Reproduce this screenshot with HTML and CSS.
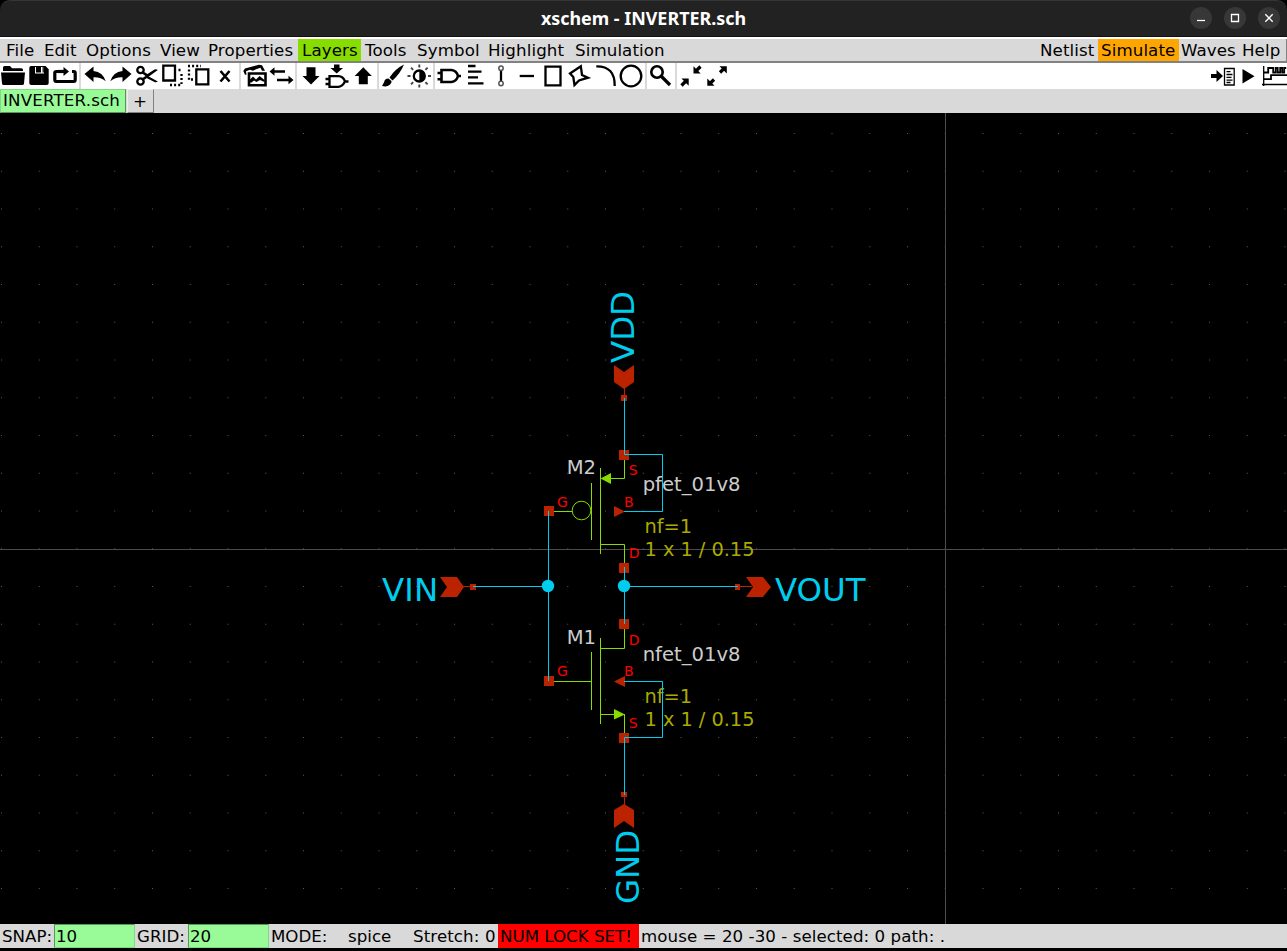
FILE: index.html
```html
<!DOCTYPE html>
<html lang="en">
<head>
<meta charset="utf-8">
<title>xschem - INVERTER.sch</title>
<link rel="stylesheet" href="styles.css">
</head>
<body>
<div class="window">
<header class="titlebar">
  <div class="title">xschem - INVERTER.sch</div>
  <div class="controls">
    <span class="ctl"><svg viewBox="0 0 22 22"><path d="M7 13.500h8"/></svg></span>
    <span class="ctl"><svg viewBox="0 0 22 22"><path d="M7.500 7.500h7v7h-7z"/></svg></span>
    <span class="ctl"><svg viewBox="0 0 22 22"><path d="M7.300 7.300l7.400 7.400M14.700 7.300l-7.400 7.400"/></svg></span>
  </div>
</header>
<nav class="menubar">
  <span class="m w38">File</span><span class="m w42">Edit</span><span class="m w74">Options</span><span class="m w48">View</span><span class="m w94">Properties</span><span class="m w63 layers">Layers</span><span class="m w52">Tools</span><span class="m w71">Symbol</span><span class="m w87">Highlight</span><span class="m w98">Simulation</span>
  <span class="m right w62">Netlist</span><span class="m w81 simulate">Simulate</span><span class="m w60 waves">Waves</span><span class="m w48 help">Help</span>
</nav>
<div class="toolbar">
  <svg class="ic" viewBox="0 0 26 26"><path d="M3 8V4.500Q3 3 4.500 3H10l2 2.200h9.500Q23 5.200 23 7v1z"/><path d="M1 9.500h24l-1 11q-.2 1.500-1.700 1.500H3.700Q2.200 22 2 20.500z"/></svg>
  <svg class="ic" viewBox="0 0 26 26"><path d="M5 3h14.500l3.200 3.200V20q0 2-2 2H5.300q-2 0-2-2V5q0-2 1.700-2z"/><path class="wf" d="M9 4h9v6.500H9z"/><path d="M10 3.500h5v6H10zM16.600 3.500h1.200v6h-1.200z"/></svg>
  <svg class="ic" viewBox="0 0 26 26"><path class="s3" d="M8 8.500H4.500Q2.800 8.500 2.800 10v6.500q0 2 1.500 2h17.400q1.500 0 1.500-2V10q0-1.500-1.500-1.500H20"/><path class="s3" d="M6 8.500h7"/><path d="M11.500 4l5.500 4.500-5.500 4.500z"/></svg>
  <i class="sep"></i>
  <svg class="ic" viewBox="0 0 26 26"><path d="M2.500 11L11.500 3.500v4.500q9.500 1 12.200 10.300-5-4.300-12.200-4v4.700z"/></svg>
  <svg class="ic" viewBox="0 0 26 26"><path d="M23.500 11L14.500 3.500v4.500Q5 9 2.300 18.300q5-4.300 12.200-4v4.700z"/></svg>
  <svg class="ic" viewBox="0 0 26 26"><circle class="s2" cx="6.500" cy="7" r="3.200"/><circle class="s2" cx="6.500" cy="18.500" r="3.200"/><path d="M8.500 8l5 3 7-4.500q2-.8 3.300.6L11.500 16l-3 2-1.500-2 4.500-3L7.500 10z"/><path d="M13 12.500l10.800 6q-1.200 1.300-3.300.5l-9-4.500z"/></svg>
  <svg class="ic" viewBox="0 0 26 26"><path class="s2" d="M3.300 2.700h11.700v14.800H3.300z"/><path class="dot" d="M18.500 7h4M21.500 11v10M10 22h12"/></svg>
  <svg class="ic" viewBox="0 0 26 26"><path class="s2" d="M10.300 6.300h12v15h-12z"/><path class="dot" d="M2 3h13M3 6.500v12M5 16.500h3"/></svg>
  <svg class="ic" viewBox="0 0 26 26"><path class="s25" d="M8.500 8l9 10.500M17.500 8l-9 10.500"/></svg>
  <i class="sep"></i>
  <svg class="ic" viewBox="0 0 26 26"><path class="s25" d="M7 10.500h16.500v11.800H7z"/><path d="M1.300 8L3 5.500 17 1.700l3 .5 3 5.500h-3l-1.500-3-4.500 1.500-3 1.500-3-1-4 1.500.5 3.500H3zM7.500 17l3.500-3.500 3 3 3.500-3.500 5 4v2l-4.500-2-3.500 2-2.500-1.500-2.500 2h-2z"/></svg>
  <svg class="ic" viewBox="0 0 26 26"><path class="s25" d="M5 8.500h12M9 17h12"/><path d="M1.500 8.500l5-4.300v8.600zM25.500 17l-5-4.300v8.600z"/></svg>
  <i class="sep"></i>
  <svg class="ic" viewBox="0 0 26 26"><path d="M8.500 4.300h9V13h4L13 21.500 4.500 13h4z"/></svg>
  <svg class="ic" viewBox="0 0 26 26"><path d="M10 1.500h5.500V5H19l-6.300 5.500L6.500 5H10z"/><path class="s2" d="M5.500 13.200h9q4.500.3 6.500 5-2 5.300-6.500 5.600h-9zM1.500 16h4M1.500 21h4M21 18.500h3.500"/></svg>
  <svg class="ic" viewBox="0 0 26 26"><path d="M8.800 21.300h9V13h4L13.300 4.300 4.700 13h4.100z"/></svg>
  <i class="sep"></i>
  <svg class="ic" viewBox="0 0 26 26"><path d="M24 1.500q-8.500 4-14.500 13l3 3Q20 11 24 1.500zM8.500 15.500q-4 0-4.300 3.500L2 23q5 1.200 7.500-1 2.500-2 2-4z"/></svg>
  <svg class="ic" viewBox="0 0 26 26"><circle class="s2" cx="13.300" cy="13" r="5.500"/><path d="M13.300 7.500a5.500 5.500 0 0 1 0 11z"/><path class="ray" d="M13.300 1.500v3M13.300 21.500v3M1.500 13h3M22 13h3M5 4.700l2.200 2.200M19.400 19.100l2.200 2.200M21.600 4.700l-2.200 2.200M7.200 19.100L5 21.300"/></svg>
  <i class="sep"></i>
  <svg class="ic" viewBox="0 0 26 26"><path class="s25" d="M5.500 7h10q5 .5 6.500 6-1.500 5.500-6.500 6h-10zM1.500 10h4M1.500 16.200h4M22 13h3"/></svg>
  <svg class="ic" viewBox="0 0 26 26"><path class="s2" d="M6 3h7.500M6 8.700h13.500M6 14.300h10M6 20.300h15.500"/></svg>
  <svg class="ic" viewBox="0 0 26 26"><path class="s2" d="M13 7v12"/><circle class="gr" cx="13" cy="5.200" r="2.200"/><circle class="gr" cx="13" cy="20.500" r="2.200"/></svg>
  <svg class="ic" viewBox="0 0 26 26"><path class="s2" d="M5.700 13H20"/></svg>
  <svg class="ic" viewBox="0 0 26 26"><path class="s2" d="M5.500 3.700h15v18.600h-15z"/></svg>
  <svg class="ic" viewBox="0 0 26 26"><path class="s2" d="M4 10.500l10.800-7.300L16 12l6 2.700-9 2.800-4.500 4.500-1.200-8z"/></svg>
  <svg class="ic" viewBox="0 0 26 26"><path class="s2" d="M4.300 3.300Q23 3 22.700 23"/></svg>
  <svg class="ic" viewBox="0 0 26 26"><circle class="s2" cx="13" cy="13" r="10.300"/></svg>
  <i class="sep"></i>
  <svg class="ic" viewBox="0 0 26 26"><circle class="s25" cx="9" cy="9" r="5.700"/><path class="s3" d="M13.500 13.500l8.500 8.500"/></svg>
  <i class="sep"></i>
  <svg class="ic" viewBox="0 0 26 26"><path class="s3" d="M3.500 22.500L8 18M22.500 3.500L18 8"/><path d="M3.500 15.500h7.200v7.200zM15.500 3.300v7.200h7.200z"/></svg>
  <svg class="ic" viewBox="0 0 26 26"><path class="s3" d="M10 16.500L6 20.500M16 9.500l4-4"/><path d="M3.300 15.500v7.300h7.200zM15.500 3.300h7.300v7.200z"/></svg>
  <svg class="ic right" viewBox="0 0 26 26"><path d="M2 11h5.500V7l6.500 6-6.500 6v-4H2z"/><path class="s1" d="M15.500 5.500h9.700v16.500h-9.700z"/><path class="s1" d="M17.500 8.700h4M17.500 11.500h6M17.500 14.300h5M17.500 17.100h6M17.500 19.500h4"/></svg>
  <svg class="ic" viewBox="0 0 26 26"><path d="M7.500 6l12 7.200-12 7.300z"/></svg>
  <svg class="ic" viewBox="0 0 26 26"><path class="s1" d="M2.700 3v20M1 21.500h25"/><path class="s15" d="M2.700 9.500h4.500V5h5v4.500h2.500V5h2v4.500h2.500V5h2v4.500h2V5h2M2.700 16.200H10v-4h16"/></svg>
</div>
<div class="tabs"><span class="tab active">INVERTER.sch</span><span class="tab plus">+</span></div>
<svg class="schematic" viewBox="0 113 1287 811">
  <defs><pattern id="grid" x="1" y="133" width="37.750" height="37.750" patternUnits="userSpaceOnUse"><rect width="1" height="1" fill="#5a5a5a"/></pattern></defs>
  <rect y="113" width="1287" height="811" fill="url(#grid)"/>
  <path class="axis" d="M945.500 113v811M0 549.500h1287"/>
  <g class="label">
    <text x="642.700" y="491">pfet_01v8</text><text x="642.700" y="661">nfet_01v8</text>
    <text x="566.700" y="474">M2</text><text x="566.700" y="644">M1</text>
  </g>
  <g class="param">
    <text x="644.500" y="533">nf=1</text><text x="644.500" y="556" textLength="110">1 x 1 / 0.15</text>
    <text x="644.500" y="703">nf=1</text><text x="644.500" y="726" textLength="110">1 x 1 / 0.15</text>
  </g>
  <g class="dev">
    <path d="M624.500 460V478.500H605M600.500 468V554M600.500 544.500H624.500V564M591.500 483V540M554 511.500H572"/>
    <circle cx="581.500" cy="510.500" r="9.300"/>
    <path d="M624.500 629V648.500H600.500M600.500 638V724M600.500 714.500H615M624.500 714V734M591.500 652V710M554 681.500H591.500"/>
    <path class="devfill" d="M600.500 478.500l10.500-5.500v11zM625 714.500l-11-5.500v10.500z"/>
  </g>
  <g class="pin">
    <path d="M619 450h10v10h-10zM544 506h10v10h-10zM619 563h10v10h-10zM619 619h10v10h-10zM544 676h10v10h-10zM619 733h10v10h-10z"/>
    <path d="M614 506v11l11-5.500zM625 676v11l-11-5.500z"/>
    <path d="M735 584h5v6h-5zM470 584h6v6h-6zM621 395h6v6h-6zM621 792h6v5h-6z"/>
    <path d="M740 586h12v1h-12zM463 586h8v1h-8zM624 388h1v8h-1zM624 797h1v8h-1z"/>
    <path d="M746 577h17l8 10-8 10h-17l7-10zM440 577h17l7 10-7 10h-17l7-10zM614 365l10 7 10-7v17l-10 7-10-7zM624 804l10 6v18l-10-7-10 7v-18z"/>
  </g>
  <g class="wire">
    <path d="M624.500 398V454.500H662.500V511.500H624M548.500 511V681M473 586.500H548M624.500 567V624M624 586.500H738M624 681.500H662.500V737.500H624.500V795"/>
    <circle cx="548" cy="586" r="6.200"/><circle cx="624" cy="586" r="6.200"/>
  </g>
  <g class="port">
    <text x="382" y="601" textLength="56.300">VIN</text><text x="775" y="601">VOUT</text>
    <text transform="translate(634 363) rotate(-90)">VDD</text><text transform="translate(639 904) rotate(-90)">GND</text>
  </g>
  <g class="pinname">
    <text x="628.800" y="475">S</text><text x="557" y="507">G</text><text x="624" y="507">B</text><text x="628.800" y="558">D</text>
    <text x="628.800" y="645">D</text><text x="557" y="676">G</text><text x="624" y="676">B</text><text x="628.800" y="728">S</text>
  </g>
</svg>
<footer class="status">
  <span class="c snap">SNAP:</span><span class="entry">10</span><span class="c grid">GRID:</span><span class="entry">20</span><span class="c mode">MODE:</span><span class="c spice">spice</span><span class="c stretch">Stretch: 0</span><span class="num">NUM LOCK SET!</span><span class="c mouse">mouse = 20 -30 - selected: 0 path: .</span>
</footer>
</div>
</body>
</html>
```
FILE: styles.css
```css
* { box-sizing: border-box; }
body { margin: 0; background: #000; font-family: "DejaVu Sans", sans-serif; font-size: 16.670px; color: #000; overflow: hidden; }
.window { width: 1287px; height: 951px; display: flex; flex-direction: column; background: #000; }
.titlebar { flex: none; height: 37px; display: grid; grid-template-columns: 1fr auto 1fr; align-items: center; background: #222; border-top: 1px solid #353535; border-bottom: 1px solid #140f14; border-radius: 10px 10px 0 0; }
.title { grid-column: 2; font: 700 17.900px/24px "Noto Sans", sans-serif; color: #fff; white-space: pre; padding-bottom: 2px; }
.controls { grid-column: 3; justify-self: end; display: flex; gap: 12px; padding: 0 7px 1px 0; }
.ctl { width: 22px; height: 22px; border-radius: 50%; background: #373737; }
.ctl svg { display: block; width: 22px; height: 22px; fill: none; stroke: #fff; stroke-width: 1.300; }
.menubar { flex: none; height: 26px; display: flex; padding-left: 2px; background: #d9d9d9; border-top: 2px solid #fff; border-bottom: 2px solid #828282; }
.m { flex: none; padding-left: 4px; line-height: 23px; height: 22px; white-space: pre; letter-spacing: .1px; }
.w38 { width: 38px; } .w42 { width: 42px; } .w74 { width: 74px; } .w48 { width: 48px; } .w94 { width: 94px; }
.w63 { width: 63px; } .w52 { width: 52px; } .w71 { width: 71px; } .w87 { width: 87px; } .w98 { width: 98px; }
.w62 { width: 62px; } .w81 { width: 81px; } .w60 { width: 60px; }
.help { padding-left: 3px; border-right: 1px solid #828282; }
.right { margin-left: auto; }
.layers { background: #88dd00; }
.simulate { background: #ffa500; padding-left: 3px; }
.waves { padding-left: 2px; }
.toolbar { flex: none; height: 26px; display: flex; background: #fff; }
.ic { flex: none; width: 26px; height: 26px; fill: #000; }
.sep { flex: none; width: 2px; margin: 0 1px; background: #d9d9d9; }
.s1, .s15, .s2, .s25, .s3, .dot, .ray, .gr { fill: none; stroke: #000; stroke-width: 2.300; }
.s1 { stroke-width: 1.300; }
.s15 { stroke-width: 1.800; }
.s25 { stroke-width: 2.600; }
.s3 { stroke-width: 3.200; }
.dot { stroke-dasharray: 2 2.100; }
.ray { stroke: #444; stroke-width: 1.900; }
.gr { stroke: #555; stroke-width: 1.500; fill: #fff; }
.wf { fill: #fff; }
.tabs { flex: none; height: 24px; display: flex; gap: 1px; background: #d9d9d9; }
.tab { height: 24px; line-height: 22px; border: 1px solid #eee; border-right-color: #828282; border-bottom-color: #828282; white-space: pre; }
.active { width: 126px; padding-left: 2px; background: #98fb98; border-color: #84d884 #5a965a #5a965a #84d884; letter-spacing: .17px; }
.plus { width: 27px; text-align: center; line-height: 24px; padding-right: 1px; }
.schematic { flex: none; display: block; width: 1287px; height: 811px; background: #000; }
.schematic text { font-family: "DejaVu Sans", sans-serif; }
.axis { stroke: #4c4c4c; fill: none; }
.label { fill: #ccc; font-size: 19.600px; }
.param { fill: #aaaa00; font-size: 19.400px; }
.dev { fill: none; stroke: #88dd00; }
.devfill { fill: #88dd00; stroke: none; }
.pin { fill: #bb2200; }
.wire path { fill: none; stroke: #00ccee; }
.wire circle { fill: #00ccee; }
.port { fill: #00ccee; font-size: 32.400px; }
.pinname { fill: #ff0000; font-size: 14px; }
.status { flex: none; height: 24px; display: flex; background: #d9d9d9; line-height: 25px; white-space: pre; }
.status span { flex: none; height: 24px; }
.c { padding-left: 2px; }
.snap { width: 54px; }
.grid { width: 53px; }
.entry { width: 81px; padding-left: 1px; line-height: 23px; background: #98fb98; border: 1px solid; border-color: #5a965a #84d884 #84d884 #5a965a; }
.mode { width: 77px; }
.spice { width: 65px; }
.stretch { width: 87px; letter-spacing: .1px; }
.num { width: 141px; padding-left: 2px; background: #f00; }
.mouse { padding-left: 2px; letter-spacing: .06px; }
```
